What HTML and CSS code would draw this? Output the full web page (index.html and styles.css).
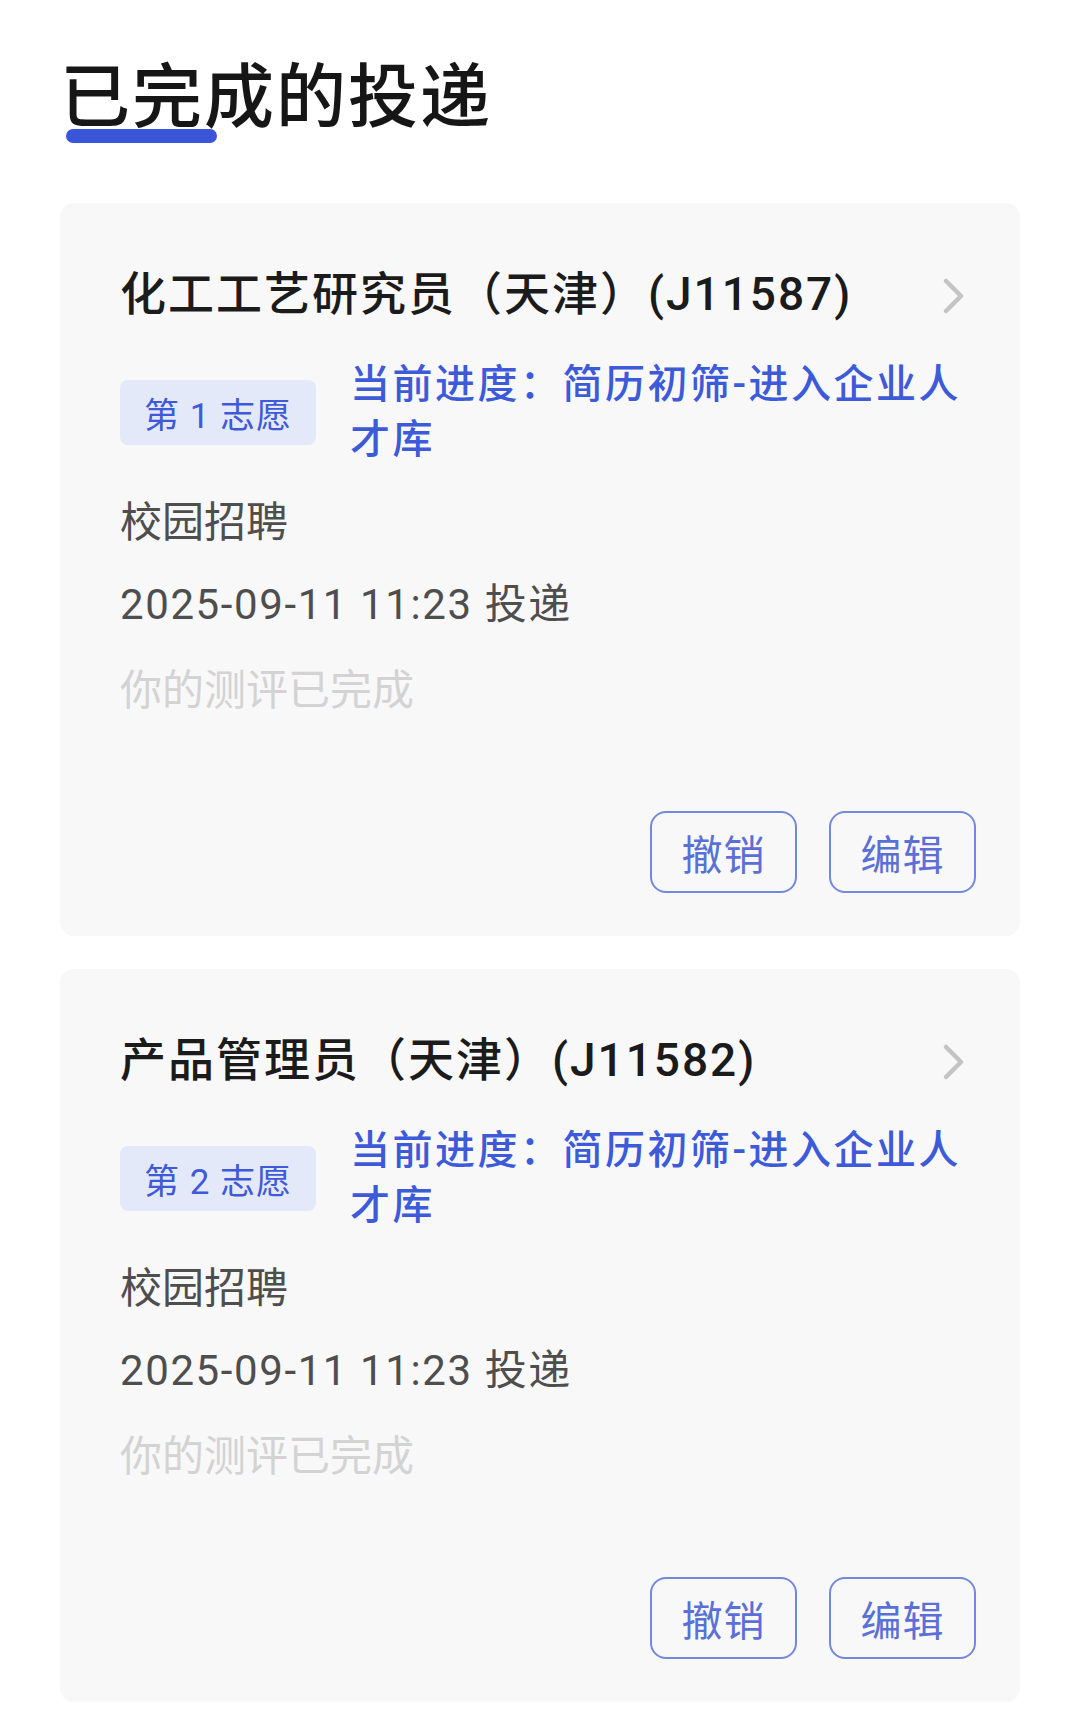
FILE: index.html
```html
<!DOCTYPE html>
<html lang="zh-CN">
<head>
<meta charset="utf-8">
<title>已完成的投递</title>
<link rel="stylesheet" href="styles.css">
</head>
<body>
<main class="page">
  <h1 class="page-title">已完成的投递</h1>

  <div class="card-list">
    <section class="card">
      <div class="card-head">
        <h2 class="job-title">化工工艺研究员（天津）(J11587)</h2>
        <svg class="chevron" viewBox="0 0 24 38" width="24" height="38"><polyline points="4,4 19,19 4,34" fill="none" stroke="#c4c4c4" stroke-width="4.5" stroke-linecap="round" stroke-linejoin="round"/></svg>
      </div>
      <div class="progress-row">
        <span class="badge">第 1 志愿</span>
        <p class="progress">当前进度：简历初筛-进入企业人才库</p>
      </div>
      <p class="meta">校园招聘</p>
      <p class="meta date">2025-09-11 11:23 投递</p>
      <p class="note">你的测评已完成</p>
      <div class="actions">
        <button class="btn">撤销</button>
        <button class="btn">编辑</button>
      </div>
    </section>

    <section class="card">
      <div class="card-head">
        <h2 class="job-title">产品管理员（天津）(J11582)</h2>
        <svg class="chevron" viewBox="0 0 24 38" width="24" height="38"><polyline points="4,4 19,19 4,34" fill="none" stroke="#c4c4c4" stroke-width="4.5" stroke-linecap="round" stroke-linejoin="round"/></svg>
      </div>
      <div class="progress-row">
        <span class="badge">第 2 志愿</span>
        <p class="progress">当前进度：简历初筛-进入企业人才库</p>
      </div>
      <p class="meta">校园招聘</p>
      <p class="meta date">2025-09-11 11:23 投递</p>
      <p class="note">你的测评已完成</p>
      <div class="actions">
        <button class="btn">撤销</button>
        <button class="btn">编辑</button>
      </div>
    </section>
  </div>
</main>
</body>
</html>
```

FILE: styles.css
```css
* { box-sizing: border-box; }

html, body {
  margin: 0;
  padding: 0;
  background: #ffffff;
}

body {
  font-family: "Roboto", "Noto Sans CJK SC", sans-serif;
  color: #1b1b1b;
  overflow: hidden;
}

.page {
  padding: 58px 60px 0 60px;
  display: flex;
  flex-direction: column;
}

.page-title {
  position: relative;
  margin: 0 0 65px 0;
  font-size: 70px;
  line-height: 80px;
  letter-spacing: 2px;
  font-weight: 500;
  color: #161616;
  z-index: 0;
}

.page-title::after {
  content: "";
  position: absolute;
  left: 6px;
  top: 71px;
  width: 151px;
  height: 14px;
  border-radius: 7px;
  background: #3b55d9;
  z-index: -1;
}

.card-list {
  display: flex;
  flex-direction: column;
  gap: 33px;
}

.card {
  background: #f8f8f9;
  border-radius: 14px;
  padding: 61px 44px 43px 60px;
  display: flex;
  flex-direction: column;
}

.card-head {
  display: flex;
  align-items: center;
  justify-content: space-between;
  height: 60px;
}

.job-title {
  margin: 0;
  font-size: 46px;
  line-height: 60px;
  letter-spacing: 2px;
  font-weight: 500;
  color: #1b1b1b;
  white-space: nowrap;
}

.chevron {
  flex: none;
  margin-right: 10px;
  margin-top: 4px;
}

.progress-row {
  display: flex;
  align-items: center;
  gap: 34px;
  margin-top: 33px;
}

.badge {
  flex: none;
  width: 196px;
  height: 65px;
  border-radius: 8px;
  background: #e4e9f9;
  color: #3f5ad8;
  font-size: 35px;
  letter-spacing: 1px;
  display: flex;
  align-items: center;
  justify-content: center;
}

.progress {
  margin: 0;
  flex: 1;
  font-size: 40px;
  line-height: 55px;
  letter-spacing: 2.5px;
  font-weight: 500;
  color: #3d5ad9;
}

.meta {
  margin: 28px 0 0 0;
  font-size: 42px;
  line-height: 56px;
  color: #4e4e4e;
}

.date {
  margin-top: 26px;
  letter-spacing: 1.6px;
}

.note {
  margin: 30px 0 0 0;
  font-size: 42px;
  line-height: 56px;
  color: #d3d3d3;
}

.actions {
  display: flex;
  justify-content: flex-end;
  gap: 32px;
  margin-top: 92px;
}

.btn {
  width: 147px;
  height: 82px;
  border: 2.5px solid #7488dc;
  border-radius: 16px;
  background: transparent;
  color: #5a70d6;
  font-family: "Noto Sans CJK SC", sans-serif;
  font-size: 41px;
  letter-spacing: 1px;
  padding: 0;
  display: flex;
  align-items: center;
  justify-content: center;
}
```
